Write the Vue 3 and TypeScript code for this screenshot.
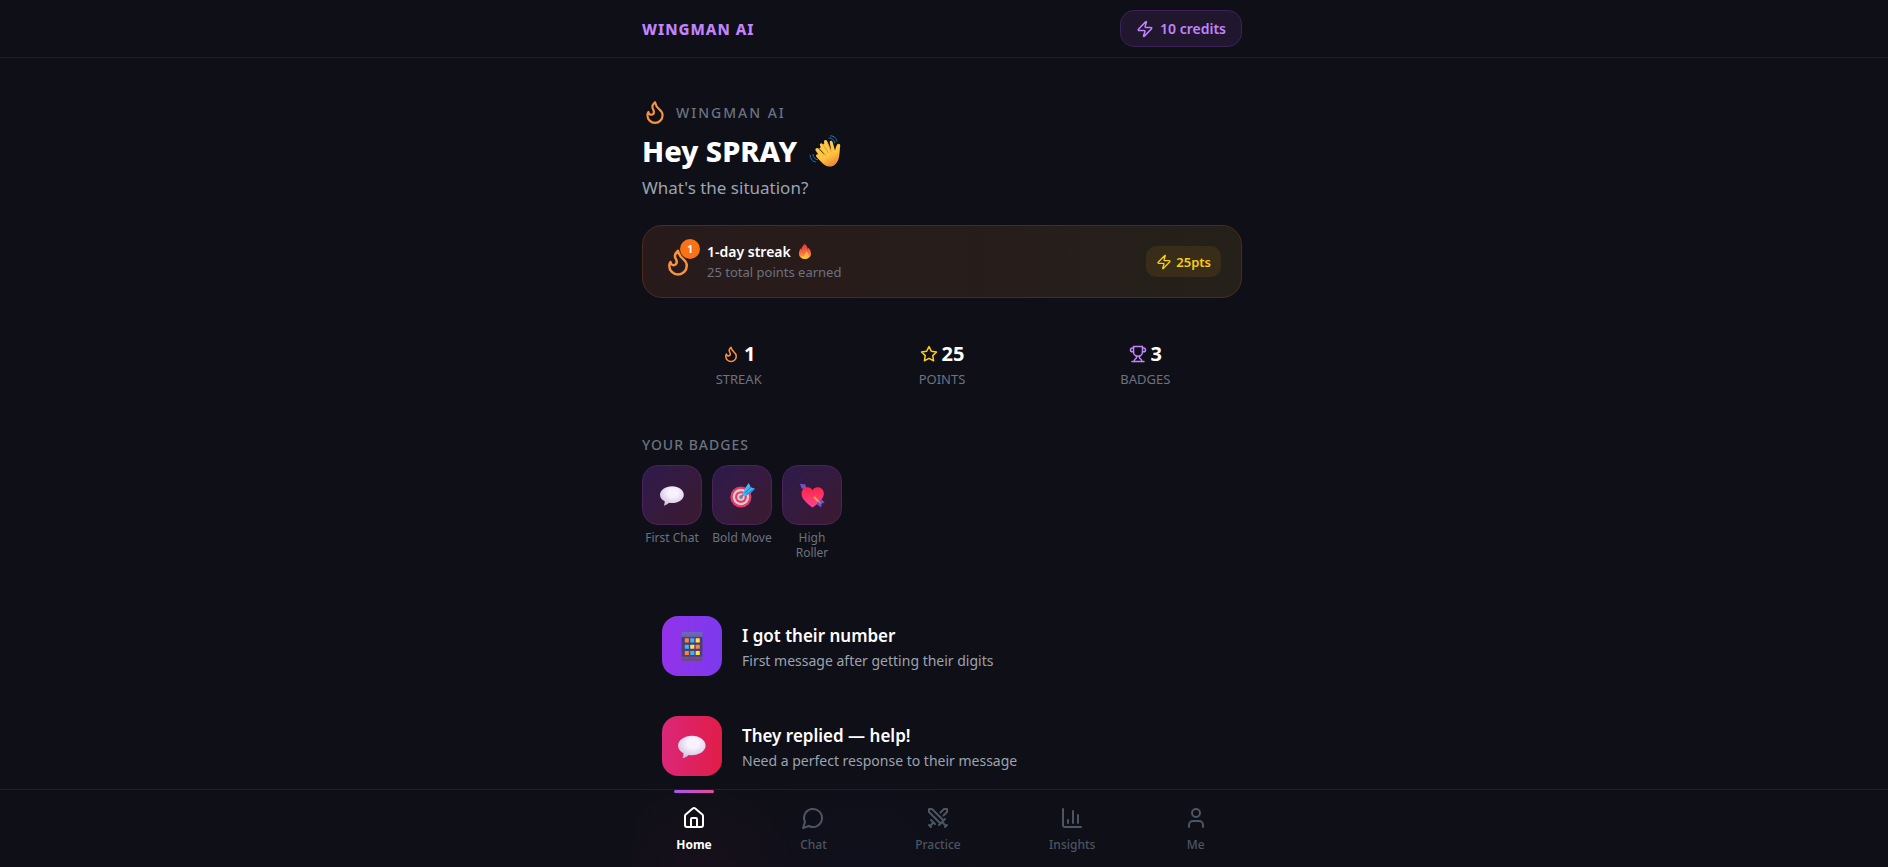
<script setup lang="ts">
import { ref } from 'vue'

interface Stat { icon: string; value: number; label: string; tone: string }
interface Badge { art: string; name: string }
interface Situation { art: string; title: string; detail: string; tone: string }

const user = 'SPRAY'
const credits = 10
const streak = 1
const points = 25
const active = ref('Home')

const stats: Stat[] = [
  { icon: 'flame', value: streak, label: 'Streak', tone: 'orange' },
  { icon: 'star', value: points, label: 'Points', tone: 'yellow' },
  { icon: 'trophy', value: 3, label: 'Badges', tone: 'purple' },
]
const badges: Badge[] = [
  { art: 'bubble', name: 'First Chat' },
  { art: 'target', name: 'Bold Move' },
  { art: 'heart', name: 'High Roller' },
]
const situations: Situation[] = [
  { art: 'phone', title: 'I got their number', detail: 'First message after getting their digits', tone: 'violet' },
  { art: 'bubble', title: 'They replied — help!', detail: 'Need a perfect response to their message', tone: 'rose' },
]
const tabs = [
  { name: 'Home', icon: 'home' },
  { name: 'Chat', icon: 'chat' },
  { name: 'Practice', icon: 'swords' },
  { name: 'Insights', icon: 'chart' },
  { name: 'Me', icon: 'person' },
]
const strokes: Record<string, string[]> = {
  flame: ['M8.5 14.5A2.5 2.5 0 0 0 11 12c0-1.38-.5-2-1-3-1.072-2.143-.224-4.054 2-6 .5 2.5 2 4.9 4 6.5 2 1.6 3 3.5 3 5.5a7 7 0 1 1-14 0c0-1.153.433-2.294 1-3a2.5 2.5 0 0 0 2.5 2.5z'],
  zap: ['M4 14a1 1 0 0 1-.78-1.63l9.9-10.2a.5.5 0 0 1 .86.46l-1.92 6.02A1 1 0 0 0 13 10h7a1 1 0 0 1 .78 1.63l-9.9 10.2a.5.5 0 0 1-.86-.46l1.92-6.02A1 1 0 0 0 11 14z'],
  star: ['M12 2l3.09 6.26L22 9.27l-5 4.87 1.18 6.88L12 17.77l-6.18 3.25L7 14.14 2 9.27l6.91-1.01z'],
  trophy: ['M6 9H4.5a2.5 2.5 0 0 1 0-5H6', 'M18 9h1.5a2.5 2.5 0 0 0 0-5H18', 'M4 22h16', 'M10 14.66V17c0 .55-.47.98-.97 1.21C7.85 18.75 7 20.24 7 22', 'M14 14.66V17c0 .55.47.98.97 1.21C16.15 18.75 17 20.24 17 22', 'M18 2H6v7a6 6 0 0 0 12 0V2Z'],
  home: ['M15 21v-8a1 1 0 0 0-1-1h-4a1 1 0 0 0-1 1v8', 'M3 10a2 2 0 0 1 .709-1.528l7-5.999a2 2 0 0 1 2.582 0l7 5.999A2 2 0 0 1 21 10v9a2 2 0 0 1-2 2H5a2 2 0 0 1-2-2z'],
  chat: ['M7.9 20A9 9 0 1 0 4 16.1L2 22Z'],
  swords: ['M14.5 17.5L3 6V3h3l11.5 11.5', 'M13 19l6-6', 'M16 16l4 4', 'M19 21l2-2', 'M14.5 6.5L18 3h3v3l-3.5 3.5', 'M5 14l4 4', 'M7 17l-3 3', 'M3 19l2 2'],
  chart: ['M3 3v16a2 2 0 0 0 2 2h16', 'M18 17V9', 'M13 17V5', 'M8 17v-3'],
  person: ['M19 21v-2a4 4 0 0 0-4-4H9a4 4 0 0 0-4 4v2', 'M8 7a4 4 0 1 0 8 0a4 4 0 1 0-8 0'],
}
</script>

<template>
  <div class="page">
    <svg class="defs" aria-hidden="true">
      <defs>
        <radialGradient id="bubbleFill" cx="0.55" cy="0.35" r="0.7"><stop offset="0.3" stop-color="#f7f2fb" /><stop offset="1" stop-color="#cdbbe0" /></radialGradient>
        <linearGradient id="fireFill" x1="0" y1="0" x2="0" y2="1"><stop stop-color="#d9383f" /><stop offset="0.55" stop-color="#f5693c" /><stop offset="1" stop-color="#ffb43c" /></linearGradient>
        <linearGradient id="handFill" x1="0" y1="0" x2="0.5" y2="1"><stop stop-color="#ffd24d" /><stop offset="0.7" stop-color="#ffc23e" /><stop offset="1" stop-color="#ee8f3a" /></linearGradient>
        <linearGradient id="heartFill" x1="0.3" y1="0" x2="0.4" y2="1"><stop stop-color="#ff2447" /><stop offset="1" stop-color="#ff4495" /></linearGradient>
        <linearGradient id="phoneFill" x1="0" y1="0" x2="0" y2="1"><stop stop-color="#6b6bb8" /><stop offset="0.15" stop-color="#6b62ad" /><stop offset="0.2" stop-color="#493b70" /><stop offset="0.83" stop-color="#51407b" /><stop offset="0.88" stop-color="#754b94" /><stop offset="1" stop-color="#684a87" /></linearGradient>
        <symbol id="art-bubble" viewBox="0 0 32 32"><path d="M15.500 4C7 4 0 8.800 0 15c0 3.500 2.100 6.500 6 8.500 0 2-.2 3.200-.8 4.400-.3.800.3 1.200 1 .9 2.200-.8 4-2.100 5.300-3.400 1.100.2 2.300.3 3.500.3 8.500 0 15.500-4.600 15.500-10.700S24 4 15.500 4z" fill="url(#bubbleFill)" /></symbol>
        <symbol id="art-target" viewBox="0 0 32 32">
          <circle cx="14" cy="18" r="13.500" fill="#e83b62" /><circle cx="14" cy="18" r="10.500" fill="#dccbdc" /><circle cx="14" cy="18" r="7.600" fill="#e83b62" /><circle cx="14" cy="18" r="4.800" fill="#dccbdc" /><circle cx="14" cy="18" r="2.400" fill="#8e789b" />
          <path d="M14 18l7-7" stroke="#68728c" stroke-width="2" /><path d="M16 13l5-9 3-4 2.500 5.500 5.500 2-4 4-8 5-3-.5z" fill="#43b9f7" /><path d="M19 13L27 5M21 15l9-7" stroke="#2680d4" stroke-width="1.500" />
        </symbol>
        <symbol id="art-heart" viewBox="0 0 32 32">
          <path d="M3 4l7 7" stroke="#f7a13e" stroke-width="2.200" /><path d="M0 1l7 1 1 6-6-1z" fill="#7152c9" /><path d="M16 9.500C13 3 2 4.500 2 14c0 7 8.500 13 14 17.500C22 27 30.500 21 30.500 13.500 30.500 4.500 19 3 16 9.500z" fill="url(#heartFill)" /><path d="M18 18l9 9" stroke="#ffa43f" stroke-width="2.500" /><path d="M23.500 22.500l5-1 3 4-4 .5M22.500 23.500l-.5 4 5 4 .5-4.500" fill="#7652cc" />
        </symbol>
        <symbol id="art-phone" viewBox="0 0 32 32">
          <rect x="4" y="0" width="23" height="32" rx="1.500" fill="url(#phoneFill)" />
          <g fill="#ff823d"><rect x="7.500" y="7" width="4.500" height="4.500" rx=".6" /><rect x="7.500" y="14" width="4.500" height="4.500" rx=".6" fill="#36b6fb" /><rect x="7.500" y="21" width="4.500" height="4.500" rx=".6" /></g>
          <g fill="#36b6fb"><rect x="13.500" y="7" width="4.500" height="4.500" rx=".6" /><rect x="13.500" y="14" width="4.500" height="4.500" rx=".6" fill="#ffe34a" /><rect x="13.500" y="21" width="4.500" height="4.500" rx=".6" /></g>
          <g fill="#ffe34a"><rect x="19.500" y="7" width="4.500" height="4.500" rx=".6" /><rect x="19.500" y="14" width="4.500" height="4.500" rx=".6" fill="#ff823d" /><rect x="19.500" y="21" width="4.500" height="4.500" rx=".6" /></g>
        </symbol>
      </defs>
    </svg>

    <header class="topbar">
      <div class="column topbar-row">
        <span class="brand">WINGMAN AI</span>
        <button class="credits" type="button">
          <svg class="icon s18" viewBox="0 0 24 24"><path v-for="d in strokes.zap" :key="d" :d="d" /></svg>
          {{ credits }} credits
        </button>
      </div>
    </header>

    <main class="column content">
      <div class="eyebrow">
        <svg class="icon s26 orange" viewBox="0 0 24 24"><path v-for="d in strokes.flame" :key="d" :d="d" /></svg>
        <span>WINGMAN AI</span>
      </div>
      <h1>
        Hey {{ user }}
        <svg class="wave" viewBox="0 0 32 32" role="img" aria-label="Waving hand">
          <path d="M9.500 13.500l6 6.500-4.500-9.500c-.8-1.900 1.500-3.200 2.600-1.500l5 8-3.600-10c-.6-2 2.200-3 3.100-1.100l4.200 9.500-1.600-8c-.3-1.800 2.300-2.400 2.900-.5l2.400 8.500c.6-2.200 1-4.600 2.200-6 1.200-1.300 3.300-.4 3 1.500-.6 4-.3 7-1.300 11.500-1 5.500-4.800 9.100-9.400 9.100-3.500 0-5.600-1.700-8-4.300l-5-5.300c-1.300-1.600.5-3.400 2-2.100l-2.900-4.300c-1-1.700 1.500-3.600 2.900-2z" fill="url(#handFill)" />
          <path d="M10.500 13.500l1.500 1.500 5 5.500 5-2-2.500-8.500-4-2-1 1z" fill="#ffc843" />
          <path d="M10.500 13.500l6.500 7M14 9.500l5.500 8.500M18.500 8l3.600 8.500" fill="none" stroke="#df8f32" stroke-width=".8" />
          <path d="M20 3c3-.3 5 1.500 5.700 5M21.500.8c4 .2 6 2.500 6.400 5.600M4 19.500c.5 3.300 2 4.800 4.500 5.200M1 20c.5 4 2.300 6.300 5.500 7" fill="none" stroke="#1d78b8" stroke-width="1" stroke-linecap="round" />
        </svg>
      </h1>
      <p class="lead">What's the situation?</p>

      <section class="streak-card">
        <div class="streak-icon">
          <svg class="icon s30 orange" viewBox="0 0 24 24"><path v-for="d in strokes.flame" :key="d" :d="d" /></svg>
          <span class="count">{{ streak }}</span>
        </div>
        <div class="streak-text">
          <div class="streak-title">
            {{ streak }}-day streak
            <svg class="fire" viewBox="0 0 16 20" role="img" aria-label="Fire"><path d="M7.500 0c3.500 2.500 4 4.500 4 7 .7-.7 1-1.500 1-2.500 2 2.500 3.500 5 3.500 8 0 5-3.500 7.500-8 7.500s-8-2.500-8-7.500c0-3 1-5.500 2.500-7 0 1 .3 1.700.8 2.300C3.500 5 4.500 2 7.500 0z" fill="url(#fireFill)" /><path d="M9 9c3 3 4.500 5 3.500 8-1 2-2.500 2.500-5 2.500-3 0-4.500-1.500-4.500-3.500 2 1 3.500.5 4-.5 1-1.500 2.500-2.500 2-6.500z" fill="#ffca3c" opacity=".75" /></svg>
          </div>
          <div class="streak-detail">{{ points }} total points earned</div>
        </div>
        <span class="points">
          <svg class="icon s16" viewBox="0 0 24 24"><path v-for="d in strokes.zap" :key="d" :d="d" /></svg>
          {{ points }}pts
        </span>
      </section>

      <section class="stats">
        <div v-for="s in stats" :key="s.label" class="stat">
          <div class="stat-value">
            <svg class="icon s18" :class="s.tone" viewBox="0 0 24 24"><path v-for="d in strokes[s.icon]" :key="d" :d="d" /></svg>
            {{ s.value }}
          </div>
          <div class="stat-label">{{ s.label }}</div>
        </div>
      </section>

      <section class="badges">
        <h2>Your badges</h2>
        <ul class="badge-row">
          <li v-for="b in badges" :key="b.name" class="badge">
            <div class="badge-tile"><svg class="art"><use :href="'#art-' + b.art" /></svg></div>
            <span class="badge-name">{{ b.name }}</span>
          </li>
        </ul>
      </section>

      <section class="situations">
        <button v-for="s in situations" :key="s.title" type="button" class="situation">
          <span class="tile" :class="s.tone"><svg class="art big"><use :href="'#art-' + s.art" /></svg></span>
          <span class="situation-text">
            <span class="situation-title">{{ s.title }}</span>
            <span class="situation-detail">{{ s.detail }}</span>
          </span>
        </button>
      </section>
    </main>

    <nav class="tabbar" aria-label="Main">
      <div class="tabs">
        <button v-for="t in tabs" :key="t.name" type="button" class="tab" :class="{ active: active === t.name }" @click="active = t.name">
          <svg class="icon s24" viewBox="0 0 24 24"><path v-for="d in strokes[t.icon]" :key="d" :d="d" /></svg>
          <span>{{ t.name }}</span>
        </button>
      </div>
    </nav>
  </div>
</template>

<style>
body { background: #0f0f18; }
</style>

<style scoped>
* { box-sizing: border-box; }
.page { display: flex; flex-direction: column; height: 100vh; padding-right: 4px; overflow: hidden; color: #fff; background: #0f0f18; font-family: "Segoe UI", "Noto Sans", "Open Sans", sans-serif; }
.defs { position: absolute; width: 0; height: 0; }
button { margin: 0; border: 0; background: none; color: inherit; font: inherit; cursor: pointer; }
h1, h2, p, ul { margin: 0; padding: 0; }
.column { width: 100%; max-width: 640px; margin: 0 auto; padding: 0 20px; }
.icon { flex: none; width: 24px; height: 24px; fill: none; stroke: currentColor; stroke-width: 2; stroke-linecap: round; stroke-linejoin: round; }
.s16 { width: 16px; height: 16px; }
.s18 { width: 18px; height: 18px; }
.s26 { width: 26px; height: 26px; }
.s30 { width: 30px; height: 30px; }
.orange { color: #fb923c; }
.yellow { color: #facc15; }
.purple { color: #c084fc; }
.topbar { flex: none; margin-right: -4px; padding-right: 4px; border-bottom: 1px solid #1e1e27; }
.topbar-row { display: flex; align-items: center; justify-content: space-between; height: 57px; }
.brand { color: #c084fc; font-size: 15px; font-weight: 800; letter-spacing: 1px; }
.credits { display: flex; align-items: center; gap: 6px; height: 37px; padding: 0 15px; border: 1px solid #3d2158; border-radius: 14px; background: #20162e; color: #c084fc; font-size: 14px; font-weight: 600; }
.content { flex: 1; min-height: 0; overflow-y: auto; scrollbar-width: none; padding-top: 40px; }
.eyebrow { display: flex; align-items: center; gap: 8px; height: 28px; color: #6b7280; font-size: 14px; font-weight: 500; letter-spacing: 2px; }
h1 { display: flex; align-items: center; gap: 12px; margin-top: 4px; font-size: 29px; font-weight: 800; line-height: 42px; }
.wave { width: 32px; height: 32px; }
.lead { color: #9ca3af; font-size: 17px; line-height: 32px; }
.streak-card { display: flex; align-items: center; height: 73px; margin-top: 21px; padding: 0 20px; border: 1px solid #4d2b1c; border-radius: 20px; background: linear-gradient(90deg, #281a1b, #25201a); }
.streak-icon { position: relative; display: flex; width: 44px; }
.count { position: absolute; top: -8px; left: 17px; width: 20px; height: 20px; border-radius: 50%; background: #f97316; font-size: 10px; font-weight: 700; line-height: 20px; text-align: center; }
.streak-text { flex: 1; }
.streak-title { display: flex; align-items: center; gap: 8px; font-size: 14px; font-weight: 600; line-height: 20px; }
.fire { width: 12px; height: 15px; }
.streak-detail { color: #6b7280; font-size: 13px; line-height: 20px; }
.points { display: flex; align-items: center; gap: 4px; height: 31px; padding: 0 10px; border-radius: 10px; background: #382d19; color: #facc15; font-size: 13px; font-weight: 600; }
.stats { display: grid; grid-template-columns: repeat(3, 1fr); gap: 10px; margin-top: 41px; }
.stat { text-align: center; }
.stat-value { display: flex; align-items: center; justify-content: center; gap: 4px; font-size: 20px; font-weight: 700; line-height: 30px; }
.stat-label { color: #6b7280; font-size: 13px; line-height: 20px; text-transform: uppercase; }
.badges { margin-top: 46px; }
h2 { color: #6b7280; font-size: 14px; font-weight: 500; line-height: 20px; letter-spacing: 1px; text-transform: uppercase; }
.badge-row { display: flex; gap: 10px; margin-top: 10px; list-style: none; }
.badge { width: 60px; text-align: center; }
.badge-tile { display: grid; place-items: center; height: 60px; border: 1px solid #4a235b; border-radius: 16px; background: linear-gradient(135deg, #2e1b4c, #3c1a2f); }
.art { width: 25px; height: 25px; }
.art.big { width: 29px; height: 29px; }
.badge-name { display: block; margin-top: 5px; color: #6b7280; font-size: 12px; line-height: 15px; }
.situations { margin-top: 36px; }
.situation { display: flex; align-items: center; gap: 20px; width: 100%; height: 100px; padding: 0 20px; text-align: left; }
.tile { display: grid; place-items: center; width: 60px; height: 60px; border-radius: 16px; }
.violet { background: linear-gradient(90deg, #9333ea, #7c3aed); }
.rose { background: linear-gradient(90deg, #db2777, #e11d48); }
.situation-text { display: flex; flex-direction: column; padding-top: 4px; }
.situation-title { font-size: 17px; font-weight: 600; line-height: 26px; }
.situation-detail { color: #9ca3af; font-size: 14px; line-height: 24px; }
.tabbar { flex: none; margin-right: -4px; padding-right: 4px; border-top: 1px solid #1f2028; }
.tabs { display: flex; justify-content: space-around; width: 100%; max-width: 620px; margin: 0 auto; background: radial-gradient(circle 110px at 70px 90px, #17101a, transparent), radial-gradient(circle 120px at 230px 90px, #10101c, transparent); }
.tab { position: relative; display: flex; flex-direction: column; align-items: center; gap: 6px; height: 77px; padding: 16px 0 0; color: #4b5563; font-size: 12px; font-weight: 500; line-height: 18px; }
.tab.active { color: #fff; font-weight: 700; }
.tab.active::before { content: ""; position: absolute; top: 0; left: 50%; width: 40px; height: 3px; margin-left: -20px; border-radius: 2px; background: linear-gradient(90deg, #a855f7, #ec4899); }
</style>
